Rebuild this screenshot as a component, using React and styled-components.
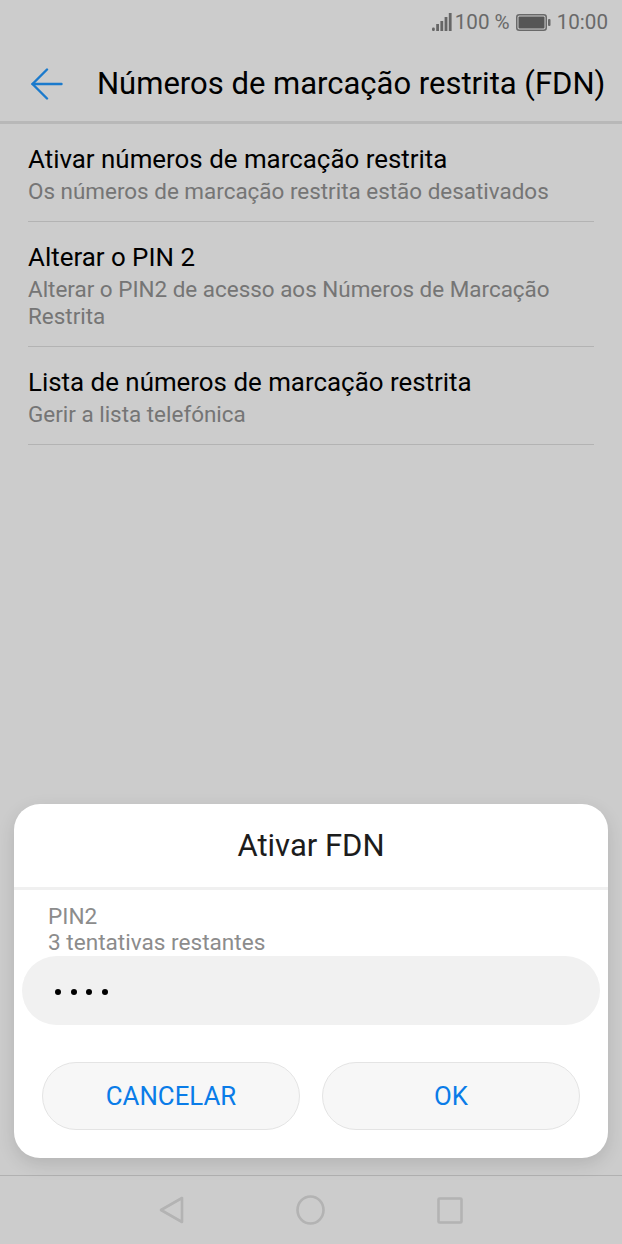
import React from "react";
import styled, { createGlobalStyle } from "styled-components";

const GlobalStyle = createGlobalStyle`
  html, body {
    margin: 0;
    padding: 0;
    background: #fff;
  }
  * {
    box-sizing: border-box;
  }
`;

const Screen = styled.div`
  position: relative;
  width: 622px;
  height: 1244px;
  overflow: hidden;
  display: flex;
  flex-direction: column;
  background: #fff;
  font-family: Roboto, "Liberation Sans", sans-serif;
`;

const StatusBar = styled.div`
  height: 44px;
  padding: 0 14px 0 0;
  display: flex;
  align-items: center;
  justify-content: flex-end;
  color: #848484;
  font-size: 20.6px;
`;

const Percent = styled.span`
  margin: 0 6px 0 3px;
`;

const Clock = styled.span`
  margin-left: 6px;
`;

const TopBar = styled.div`
  height: 80px;
  display: flex;
  align-items: center;
  padding: 2px 0 0 31px;
  border-bottom: 3px solid #e6e6e6;
`;

const Title = styled.h1`
  margin: 0 0 0 34px;
  font-size: 31px;
  font-weight: 400;
  color: #000;
  white-space: nowrap;
`;

const List = styled.div`
  padding: 0 28px;
  flex: 1;
`;

const Row = styled.div`
  padding: 20px 0 16px;
  border-bottom: 1px solid #e0e0e0;
`;

const RowTitle = styled.div`
  font-size: 25.9px;
  line-height: 30px;
  color: #000;
`;

const RowText = styled.div`
  font-size: 22.45px;
  line-height: 27px;
  margin-top: 4px;
  color: #939393;
`;

const NavBar = styled.div`
  height: 69px;
  display: flex;
  align-items: center;
  justify-content: center;
  gap: 112px;
  border-top: 1px solid #dedede;
`;

const Scrim = styled.div`
  position: absolute;
  inset: 0;
  background: rgba(0, 0, 0, 0.2);
`;

const Dialog = styled.div`
  position: absolute;
  left: 14px;
  top: 804px;
  width: 594px;
  height: 354px;
  background: #fff;
  border-radius: 26px;
  box-shadow: 0 6px 18px rgba(0, 0, 0, 0.12);
`;

const DialogTitle = styled.div`
  height: 86px;
  display: flex;
  align-items: center;
  justify-content: center;
  border-bottom: 3px solid #f0f0f0;
  font-size: 31px;
  color: #1c1c1c;
`;

const Hint = styled.div`
  padding: 14px 34px 0;
  font-size: 22.6px;
  line-height: 26px;
  color: #8c8c8c;
`;

const PinField = styled.div`
  margin: 0 8px;
  height: 69px;
  border-radius: 35px;
  background: #f1f1f1;
  display: flex;
  align-items: center;
  gap: 9.6px;
  padding: 2px 0 0 33px;
`;

const Dot = styled.span`
  width: 6px;
  height: 6px;
  border-radius: 50%;
  background: #000;
`;

const Actions = styled.div`
  display: flex;
  gap: 22px;
  padding: 37px 28px 0;
`;

const ActionButton = styled.button`
  flex: 1;
  height: 68px;
  border: 1px solid #e4e4e4;
  border-radius: 34px;
  background: #f7f7f7;
  color: #0a7ce8;
  font-family: inherit;
  font-size: 25.8px;
  padding: 0;
`;

const SignalIcon = () => (
  <svg width="20" height="18" viewBox="0 0 20 18" fill="#808080">
    <rect x="0" y="14.5" width="2.8" height="3.5" rx="1.2" />
    <rect x="4.2" y="11" width="2.8" height="7" />
    <rect x="8.4" y="8" width="2.8" height="10" />
    <rect x="12.6" y="4" width="2.8" height="14" />
    <rect x="16.8" y="0" width="2.8" height="18" />
  </svg>
);

const BatteryIcon = () => (
  <svg width="35" height="17" viewBox="0 0 35 17">
    <rect x="0.75" y="0.75" width="29.5" height="15.5" rx="2.5" fill="none" stroke="#848484" strokeWidth="1.5" />
    <rect x="2.5" y="2.5" width="26" height="12" rx="1" fill="#6c6c6c" />
    <rect x="32" y="5" width="2.5" height="7" rx="1" fill="#848484" />
  </svg>
);

const BackIcon = () => (
  <svg width="32" height="32" viewBox="0 0 32 32" fill="none" stroke="#2299ff" strokeWidth="2.4" strokeLinecap="round" strokeLinejoin="round">
    <path d="M1.5 16H30.5" />
    <path d="M16 1.5L1.5 16L16 30.5" />
  </svg>
);

const NavBack = () => (
  <svg width="25" height="28" viewBox="0 0 25 28" fill="none" stroke="#e0e0e0" strokeWidth="2.6" strokeLinejoin="round">
    <path d="M23 2V26L2 14Z" />
  </svg>
);

const NavHome = () => (
  <svg width="29" height="30" viewBox="0 0 29 30" fill="none" stroke="#e0e0e0" strokeWidth="2.6">
    <ellipse cx="14.5" cy="15" rx="13" ry="13.5" />
  </svg>
);

const NavRecent = () => (
  <svg width="26" height="27" viewBox="0 0 26 27" fill="none" stroke="#e0e0e0" strokeWidth="2.6" strokeLinejoin="round">
    <rect x="1.5" y="1.5" width="23" height="24" rx="1" />
  </svg>
);

const rows = [
  {
    title: "Ativar números de marcação restrita",
    text: "Os números de marcação restrita estão desativados",
  },
  {
    title: "Alterar o PIN 2",
    text: "Alterar o PIN2 de acesso aos Números de Marcação Restrita",
  },
  {
    title: "Lista de números de marcação restrita",
    text: "Gerir a lista telefónica",
  },
];

const App = () => {
  return (
    <>
      <GlobalStyle />
      <Screen>
        <StatusBar>
          <SignalIcon />
          <Percent>100 %</Percent>
          <BatteryIcon />
          <Clock>10:00</Clock>
        </StatusBar>
        <TopBar>
          <BackIcon />
          <Title>Números de marcação restrita (FDN)</Title>
        </TopBar>
        <List>
          {rows.map((row) => (
            <Row key={row.title}>
              <RowTitle>{row.title}</RowTitle>
              <RowText>{row.text}</RowText>
            </Row>
          ))}
        </List>
        <NavBar>
          <NavBack />
          <NavHome />
          <NavRecent />
        </NavBar>
        <Scrim />
        <Dialog>
          <DialogTitle>Ativar FDN</DialogTitle>
          <Hint>
            PIN2
            <br />3 tentativas restantes
          </Hint>
          <PinField>
            <Dot />
            <Dot />
            <Dot />
            <Dot />
          </PinField>
          <Actions>
            <ActionButton>CANCELAR</ActionButton>
            <ActionButton>OK</ActionButton>
          </Actions>
        </Dialog>
      </Screen>
    </>
  );
};

export default App;
